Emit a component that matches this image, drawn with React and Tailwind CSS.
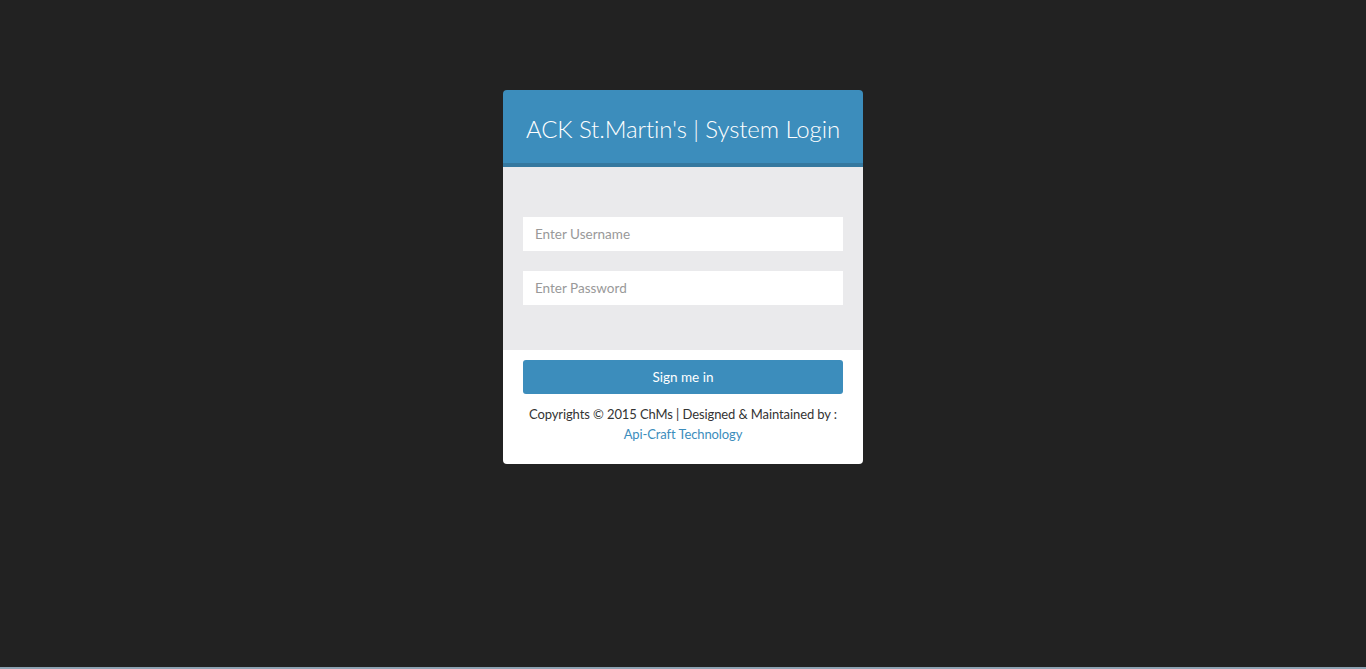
import { useState } from 'react'

export default function App() {
  const [user, setUser] = useState('')
  const [pass, setPass] = useState('')

  return (
    <div className="flex h-screen flex-col bg-[#222222] font-['Lato','Noto_Sans',sans-serif]">
      <div className="flex flex-1 justify-center pt-[90px]">
        <div className="h-fit w-[360px] overflow-hidden rounded-[4px]">
          {/* header */}
          <div className="flex h-[77px] items-center justify-center border-b-4 border-[#35789f] bg-[#3c8dbc] pt-[5px]">
            <h1 className="text-[24px] font-light tracking-[-0.1px] text-white">ACK St.Martin's | System Login</h1>
          </div>

          {/* form body */}
          <div className="flex flex-col gap-5 bg-[#eaeaec] px-5 pt-[50px] pb-[45px]">
            <input
              value={user}
              onChange={e => setUser(e.target.value)}
              placeholder="Enter Username"
              className="h-[34px] w-full bg-white px-3 text-[13.5px] text-[#555] outline-none placeholder:text-[#999]"
            />
            <input
              type="password"
              value={pass}
              onChange={e => setPass(e.target.value)}
              placeholder="Enter Password"
              className="h-[34px] w-full bg-white px-3 text-[13.5px] text-[#555] outline-none placeholder:text-[#999]"
            />
          </div>

          {/* footer */}
          <div className="flex flex-col items-center bg-white px-5 pt-[10px] pb-[20px]">
            <button className="h-[34px] w-full rounded-[3px] bg-[#3c8dbc] text-[13.5px] text-white">Sign me in</button>
            <p className="mt-[10px] text-center text-[13px] leading-[20px] tracking-[-0.1px] whitespace-nowrap text-[#333]">
              Copyrights © 2015 ChMs | Designed &amp; Maintained by :
              <br />
              <a href="#" className="text-[#3c8dbc]">Api-Craft Technology</a>
            </p>
          </div>
        </div>
      </div>
      <div className="h-[2px] bg-[#8ea3b3]" />
    </div>
  )
}
